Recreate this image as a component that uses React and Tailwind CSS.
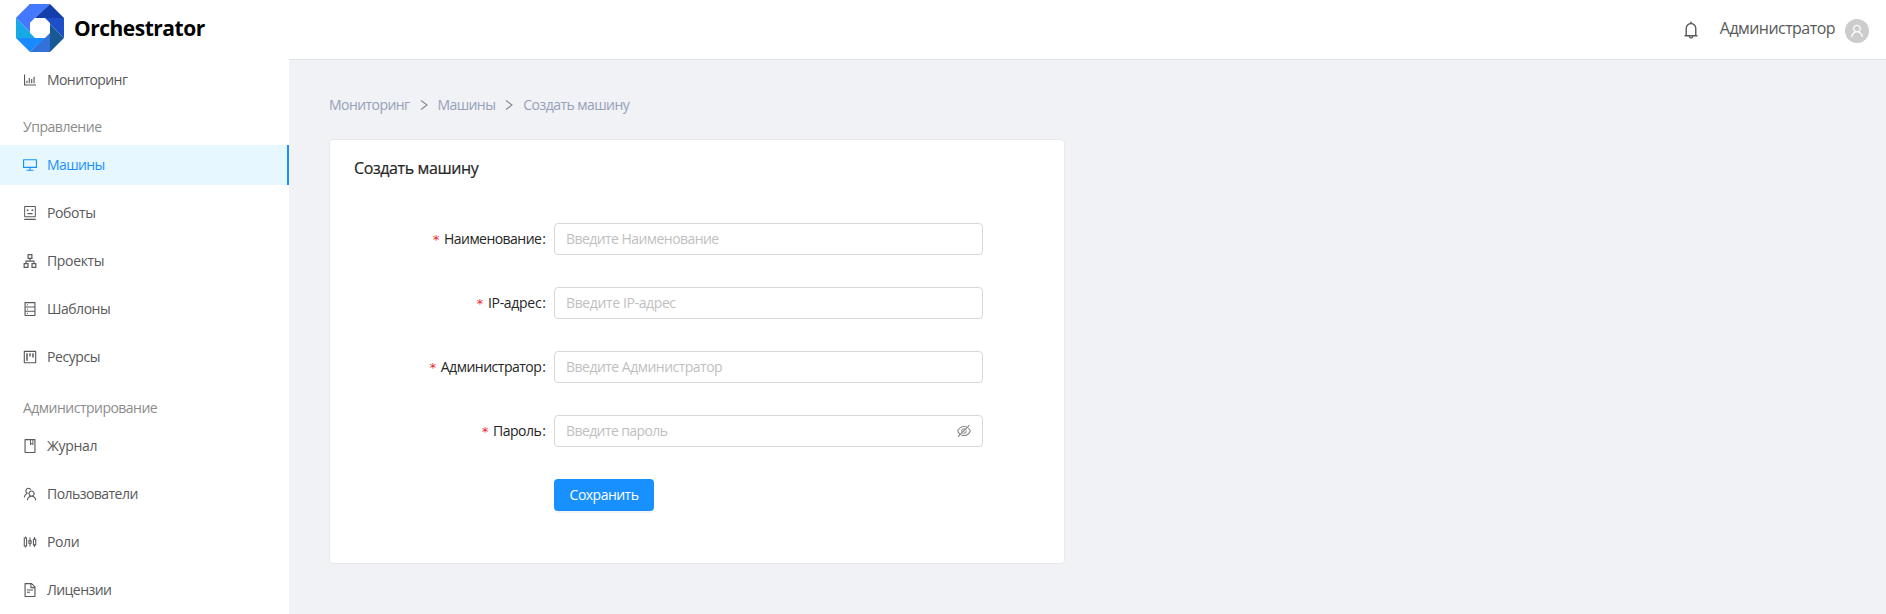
import React from "react";
import {
  AiOutlineBarChart, AiOutlineDesktop, AiOutlineRobot, AiOutlineApartment, AiOutlineDatabase,
  AiOutlineProject, AiOutlineBook, AiOutlineTeam, AiOutlineSliders, AiOutlineFileText,
  AiOutlineBell, AiOutlineUser, AiOutlineEyeInvisible,
} from "react-icons/ai";

function Logo() {
  return (
    <svg className="h-12 w-12 shrink-0" viewBox="0 0 48 48">
      <path d="M14 0H34L19 14L14 19L0 14Z" fill="#4479fd" />
      <path d="M34 0L48 14H19Z" fill="#133eac" />
      <path d="M48 14V34L34 20L28 14Z" fill="#1e4fc9" />
      <path d="M48 34L34 48V20Z" fill="#175995" />
      <path d="M34 20V48H14L28 34Z" fill="#3370d8" />
      <path d="M0 34H29L14 48Z" fill="#178bff" />
      <path d="M0 14L14 28L20 34H0Z" fill="#17a8e6" />
      <path d="M0 14L14 0V28Z" fill="#4479fd" />
      <path d="M19 14H29L34 19V29L29 34H19L14 29V19Z" fill="#fff" />
    </svg>
  );
}

function Item({ icon: Icon, label, ls, active, gap = "mb-2" }) {
  return (
    <a
      className={
        "flex h-10 w-full shrink-0 items-center pl-[22px] " + gap + " " +
        (active ? "border-r-2 border-[#1890ff] bg-[#e6f7ff] text-[#1890ff]" : "text-[#595959]")
      }
    >
      <Icon className="mr-[9px] h-4 w-4 shrink-0" />
      <span className={"text-[14px] leading-5 " + ls}>{label}</span>
    </a>
  );
}

function Field({ label, placeholder, ls, pls, password }) {
  return (
    <div className="mb-8 flex h-8 items-center">
      <label className="mr-2 flex w-[216px] items-center justify-end text-[14px] leading-5 text-[#262626]">
        <span className="mr-1 mt-[2px] font-['DejaVu_Sans_Mono',monospace] text-[13px] leading-5 text-[#f5222d]">*</span>
        <span className={ls}>{label}</span>
        <span className="ml-px">:</span>
      </label>
      <div className="flex h-8 w-[429px] items-center rounded border border-[#d9d9d9] bg-white pl-[11px] pr-[10px]">
        <input
          className={"mb-px min-w-0 flex-1 bg-transparent text-[14px] leading-5 outline-none placeholder:text-[#bfbfbf] " + pls}
          placeholder={placeholder}
        />
        {password && <AiOutlineEyeInvisible className="h-4 w-4 text-[#8c8c8c]" />}
      </div>
    </div>
  );
}

function Chevron() {
  return (
    <svg className="mx-[10px] mt-px h-[10px] w-2" viewBox="0 0 8 10" fill="none" stroke="#8c8c8c" strokeWidth="1.2">
      <path d="M1 0.5L7 5L1 9.5" />
    </svg>
  );
}

export default function App() {
  return (
    <div className="flex h-[614px] w-full overflow-hidden bg-white font-['Open_Sans','Noto_Sans',sans-serif]">
      <aside className="flex w-[289px] shrink-0 flex-col">
        <div className="flex h-[60px] shrink-0 items-start pl-4 pt-1">
          <Logo />
          <span className="ml-[10px] mt-[9px] text-[21px] font-bold leading-[30px] tracking-[-0.5px] text-black">Orchestrator</span>
        </div>
        <Item icon={AiOutlineBarChart} label="Мониторинг" ls="tracking-[-0.58px]" gap="mb-[15px]" />
        <div className="h-[30px] shrink-0 pl-[23px] text-[14px] leading-6 tracking-[-0.46px] text-[#8c8c8c]">Управление</div>
        <Item icon={AiOutlineDesktop} label="Машины" ls="tracking-[-0.6px]" active />
        <Item icon={AiOutlineRobot} label="Роботы" ls="tracking-[-0.4px]" />
        <Item icon={AiOutlineApartment} label="Проекты" ls="tracking-[-0.35px]" />
        <Item icon={AiOutlineDatabase} label="Шаблоны" ls="tracking-[-0.48px]" />
        <Item icon={AiOutlineProject} label="Ресурсы" ls="tracking-[-0.42px]" gap="mb-[19px]" />
        <div className="h-[30px] shrink-0 pl-[23px] text-[14px] leading-6 tracking-[-0.52px] text-[#8c8c8c]">Администрирование</div>
        <Item icon={AiOutlineBook} label="Журнал" ls="tracking-[-0.3px]" />
        <Item icon={AiOutlineTeam} label="Пользователи" ls="tracking-[-0.54px]" />
        <Item icon={AiOutlineSliders} label="Роли" ls="tracking-[-0.4px]" />
        <Item icon={AiOutlineFileText} label="Лицензии" ls="tracking-[-0.56px]" />
      </aside>
      <div className="flex min-w-0 flex-1 flex-col">
        <header className="flex h-[59px] shrink-0 items-center justify-end pr-[17px]">
          <AiOutlineBell className="h-5 w-5 text-[#595959]" />
          <span className="mb-1 ml-[19px] text-[16px] leading-6 tracking-[-0.55px] text-[#595959]">Администратор</span>
          <span className="ml-[10px] mt-[3px] flex h-6 w-6 items-center justify-center rounded-full bg-[#ccc] text-white">
            <AiOutlineUser className="h-4 w-4" />
          </span>
        </header>
        <main className="flex-1 border-t border-[#e1e4e9] bg-[#f0f2f5] pl-10">
          <nav className="flex h-[79px] items-center pt-[10px] text-[14px] leading-5 text-[#97a0ba]">
            <span className="tracking-[-0.56px]">Мониторинг</span>
            <Chevron />
            <span className="tracking-[-0.6px]">Машины</span>
            <Chevron />
            <span className="tracking-[-0.55px]">Создать машину</span>
          </nav>
          <section className="h-[425px] w-[736px] rounded-sm border border-[#e8e8e8] bg-white">
            <h1 className="pl-6 pt-[15px] text-[16px] font-medium leading-[26px] tracking-[-0.38px] text-[#262626] [-webkit-text-stroke:0.2px_#262626]">Создать машину</h1>
            <form className="pt-[42px]">
              <Field label="Наименование" placeholder="Введите Наименование" ls="tracking-[-0.55px]" pls="tracking-[-0.56px]" />
              <Field label="IP-адрес" placeholder="Введите IP-адрес" ls="tracking-[-0.3px]" pls="tracking-[-0.38px]" />
              <Field label="Администратор" placeholder="Введите Администратор" ls="tracking-[-0.5px]" pls="tracking-[-0.52px]" />
              <Field label="Пароль" placeholder="Введите пароль" ls="tracking-[-0.5px]" pls="tracking-[-0.6px]" password />
              <button type="button" className="ml-[224px] h-8 w-[100px] rounded bg-[#1890ff] pb-px text-[14px] leading-5 tracking-[-0.52px] text-white shadow-[0_2px_0_rgba(0,0,0,0.045)]">Сохранить</button>
            </form>
          </section>
        </main>
      </div>
    </div>
  );
}
